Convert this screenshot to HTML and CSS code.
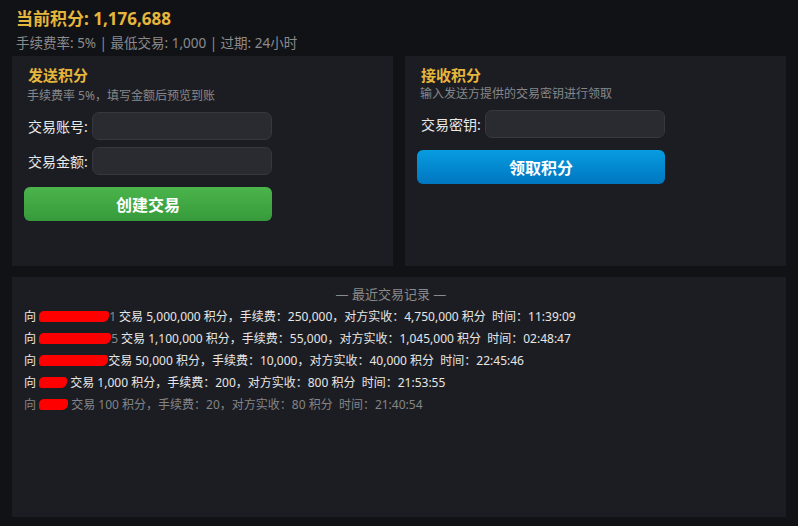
FILE: index.html
```html
<!DOCTYPE html>
<html lang="zh-CN">
<head>
<meta charset="utf-8">
<title>积分交易</title>
<link rel="stylesheet" href="styles.css">
</head>
<body>
<header class="summary">
  <h1 class="balance">当前积分: 1,176,688</h1>
  <p class="rules">手续费率: 5% | 最低交易: 1,000 | 过期: 24小时</p>
</header>

<div class="panels">
  <section class="panel">
    <h2 class="panel-title">发送积分</h2>
    <p class="panel-hint hint-send">手续费率 5%，填写金额后预览到账</p>
    <div class="form">
      <label class="field"><span class="field-label">交易账号:</span><input class="field-input" type="text"></label>
      <label class="field"><span class="field-label">交易金额:</span><input class="field-input" type="text"></label>
      <button class="btn btn-green" type="button">创建交易</button>
    </div>
  </section>

  <section class="panel">
    <h2 class="panel-title">接收积分</h2>
    <p class="panel-hint">输入发送方提供的交易密钥进行领取</p>
    <div class="form">
      <label class="field"><span class="field-label">交易密钥:</span><input class="field-input" type="text"></label>
      <button class="btn btn-blue" type="button">领取积分</button>
    </div>
  </section>
</div>

<section class="history">
  <div class="history-title">— 最近交易记录 —</div>
  <ul class="records">
    <li class="record">向 <span class="masked" style="width:70px"></span><span class="peek">1</span> 交易 5,000,000 积分，手续费：250,000，对方实收：4,750,000 积分&nbsp; 时间：11:39:09</li>
    <li class="record">向 <span class="masked" style="width:72px"></span><span class="peek">5</span> 交易 1,100,000 积分，手续费：55,000，对方实收：1,045,000 积分&nbsp; 时间：02:48:47</li>
    <li class="record">向 <span class="masked" style="width:69px"></span>交易 50,000 积分，手续费：10,000，对方实收：40,000 积分&nbsp; 时间：22:45:46</li>
    <li class="record">向 <span class="masked" style="width:28px"></span> 交易 1,000 积分，手续费：200，对方实收：800 积分&nbsp; 时间：21:53:55</li>
    <li class="record record-old">向 <span class="masked" style="width:29px"></span> 交易 100 积分，手续费：20，对方实收：80 积分&nbsp; 时间：21:40:54</li>
  </ul>
</section>
</body>
</html>
```

FILE: styles.css
```css
* {
  box-sizing: border-box;
}

html, body {
  margin: 0;
  height: 100%;
}

body {
  background: #111216;
  color: #e4e4e4;
  font-family: "Noto Sans", "Noto Sans CJK SC", sans-serif;
  padding: 0 12px;
  overflow: hidden;
}

/* top summary */
.summary {
  padding: 7px 4px 0;
  height: 56px;
}

.balance {
  margin: 0;
  font-size: 17px;
  line-height: 24px;
  font-weight: 700;
  color: #e6b63c;
}

.rules {
  margin: 0;
  font-size: 13.5px;
  line-height: 24px;
  color: #8b8b8d;
}

/* send / receive cards */
.panels {
  display: grid;
  grid-template-columns: 1fr 1fr;
  gap: 12px;
}

.panel {
  background: #1c1d22;
  height: 210px;
  padding: 9px 12px;
}

.panel-title {
  margin: 0 0 0 4px;
  font-size: 15px;
  line-height: 20px;
  font-weight: 700;
  color: #e6b63c;
}

.panel-hint {
  margin: 0 0 0 3px;
  font-size: 12px;
  line-height: 18px;
  color: #86878a;
}

.hint-send {
  margin-top: 2px;
}

.form {
  width: 248px;
  margin-top: 7px;
  display: flex;
  flex-direction: column;
  gap: 7px;
}

.field {
  display: flex;
  align-items: center;
  gap: 4px;
  padding-left: 4px;
}

.field-label {
  flex: none;
  white-space: nowrap;
  font-size: 14px;
  color: #e8e8e8;
}

.field-input {
  flex: 1;
  min-width: 0;
  height: 28px;
  background: #2a2b30;
  border: 1px solid #37383e;
  border-radius: 7px;
  outline: none;
  color: #e8e8e8;
}

.btn {
  margin-top: 5px;
  height: 34px;
  border: none;
  border-radius: 6px;
  color: #ffffff;
  font-family: inherit;
  font-size: 16px;
  font-weight: 700;
}

.btn-green {
  background: linear-gradient(#4bb44b, #369a3a);
}

.btn-blue {
  margin-top: 5px;
  background: linear-gradient(#079ce0, #0076c0);
}

/* recent records */
.history {
  margin-top: 11px;
  background: #1c1d22;
  height: 240px;
  padding: 7px 12px;
}

.history-title {
  text-align: center;
  font-size: 13px;
  line-height: 20px;
  color: #8b8b8d;
  padding-right: 16px;
}

.records {
  list-style: none;
  margin: 2px 0 0;
  padding: 0;
}

.record {
  font-size: 12px;
  line-height: 22px;
  color: #e6e6e6;
  white-space: nowrap;
}

.record-old {
  color: #848588;
}

.masked {
  display: inline-block;
  height: 11px;
  vertical-align: -1px;
  background: #ff0000;
  border-radius: 5px 3px 6px 3px;
}

.peek {
  color: #8a8a8a;
}
```
